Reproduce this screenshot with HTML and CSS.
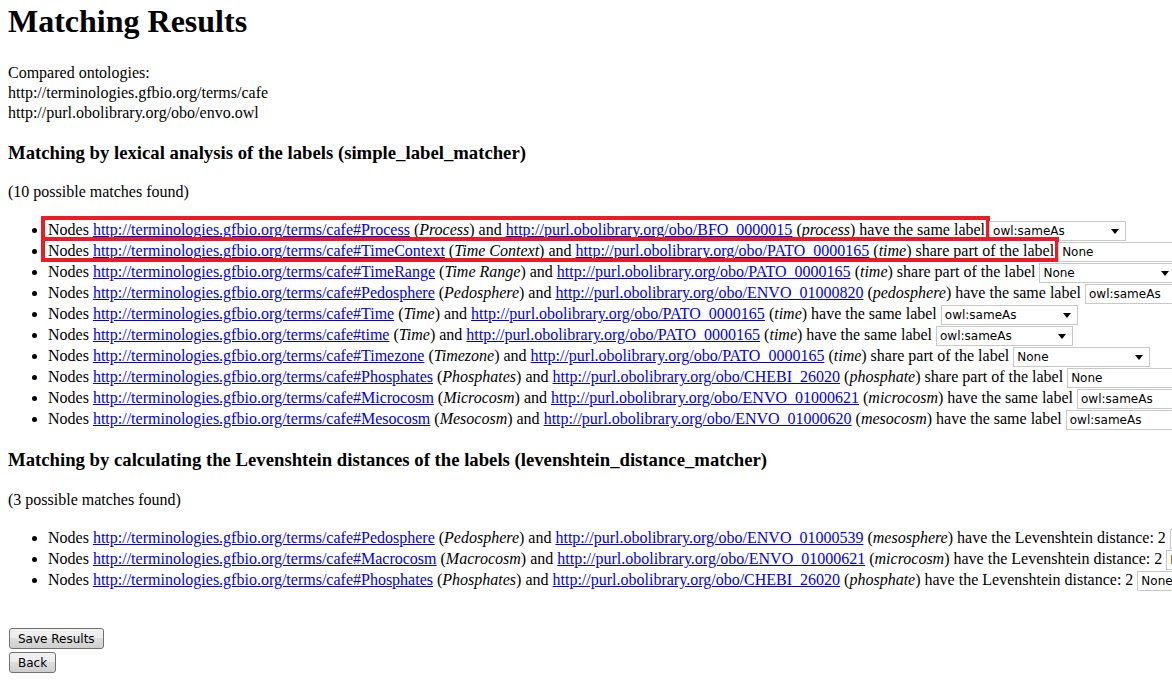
FILE: index.html
```html
<!DOCTYPE html>
<html>
<head>
<meta charset="utf-8">
<title>Matching Results</title>
<link rel="stylesheet" href="styles.css">
</head>
<body>
<h1 class="title">Matching Results</h1>
<p class="compared">Compared ontologies:<br>http://terminologies.gfbio.org/terms/cafe<br>http://purl.obolibrary.org/obo/envo.owl</p>

<h3 class="section">Matching by lexical analysis of the labels (simple_label_matcher)</h3>
<p class="count">(10 possible matches found)</p>
<ul class="matches">
<li><span class="hl">Nodes <a href="#">http://terminologies.gfbio.org/terms/cafe#Process</a> (<i>Process</i>) and <a href="#">http://purl.obolibrary.org/obo/BFO_0000015</a> (<i>process</i>) have the same label</span> <span class="sel"><select class="choice"><option selected>owl:sameAs</option><option>None</option></select><svg class="arrow" width="8" height="5" viewBox="0 0 8 5"><path d="M0 0H8L4 5Z" fill="#000"/></svg></span></li>
<li><span class="hl">Nodes <a href="#">http://terminologies.gfbio.org/terms/cafe#TimeContext</a> (<i>Time Context</i>) and <a href="#">http://purl.obolibrary.org/obo/PATO_0000165</a> (<i>time</i>) share part of the label</span> <span class="sel"><select class="choice"><option>owl:sameAs</option><option selected>None</option></select><svg class="arrow" width="8" height="5" viewBox="0 0 8 5"><path d="M0 0H8L4 5Z" fill="#000"/></svg></span></li>
<li>Nodes <a href="#">http://terminologies.gfbio.org/terms/cafe#TimeRange</a> (<i>Time Range</i>) and <a href="#">http://purl.obolibrary.org/obo/PATO_0000165</a> (<i>time</i>) share part of the label <span class="sel"><select class="choice"><option>owl:sameAs</option><option selected>None</option></select><svg class="arrow" width="8" height="5" viewBox="0 0 8 5"><path d="M0 0H8L4 5Z" fill="#000"/></svg></span></li>
<li>Nodes <a href="#">http://terminologies.gfbio.org/terms/cafe#Pedosphere</a> (<i>Pedosphere</i>) and <a href="#">http://purl.obolibrary.org/obo/ENVO_01000820</a> (<i>pedosphere</i>) have the same label <span class="sel"><select class="choice"><option selected>owl:sameAs</option><option>None</option></select><svg class="arrow" width="8" height="5" viewBox="0 0 8 5"><path d="M0 0H8L4 5Z" fill="#000"/></svg></span></li>
<li>Nodes <a href="#">http://terminologies.gfbio.org/terms/cafe#Time</a> (<i>Time</i>) and <a href="#">http://purl.obolibrary.org/obo/PATO_0000165</a> (<i>time</i>) have the same label <span class="sel"><select class="choice"><option selected>owl:sameAs</option><option>None</option></select><svg class="arrow" width="8" height="5" viewBox="0 0 8 5"><path d="M0 0H8L4 5Z" fill="#000"/></svg></span></li>
<li>Nodes <a href="#">http://terminologies.gfbio.org/terms/cafe#time</a> (<i>Time</i>) and <a href="#">http://purl.obolibrary.org/obo/PATO_0000165</a> (<i>time</i>) have the same label <span class="sel"><select class="choice"><option selected>owl:sameAs</option><option>None</option></select><svg class="arrow" width="8" height="5" viewBox="0 0 8 5"><path d="M0 0H8L4 5Z" fill="#000"/></svg></span></li>
<li>Nodes <a href="#">http://terminologies.gfbio.org/terms/cafe#Timezone</a> (<i>Timezone</i>) and <a href="#">http://purl.obolibrary.org/obo/PATO_0000165</a> (<i>time</i>) share part of the label <span class="sel"><select class="choice"><option>owl:sameAs</option><option selected>None</option></select><svg class="arrow" width="8" height="5" viewBox="0 0 8 5"><path d="M0 0H8L4 5Z" fill="#000"/></svg></span></li>
<li>Nodes <a href="#">http://terminologies.gfbio.org/terms/cafe#Phosphates</a> (<i>Phosphates</i>) and <a href="#">http://purl.obolibrary.org/obo/CHEBI_26020</a> (<i>phosphate</i>) share part of the label <span class="sel"><select class="choice"><option>owl:sameAs</option><option selected>None</option></select><svg class="arrow" width="8" height="5" viewBox="0 0 8 5"><path d="M0 0H8L4 5Z" fill="#000"/></svg></span></li>
<li>Nodes <a href="#">http://terminologies.gfbio.org/terms/cafe#Microcosm</a> (<i>Microcosm</i>) and <a href="#">http://purl.obolibrary.org/obo/ENVO_01000621</a> (<i>microcosm</i>) have the same label <span class="sel"><select class="choice"><option selected>owl:sameAs</option><option>None</option></select><svg class="arrow" width="8" height="5" viewBox="0 0 8 5"><path d="M0 0H8L4 5Z" fill="#000"/></svg></span></li>
<li>Nodes <a href="#">http://terminologies.gfbio.org/terms/cafe#Mesocosm</a> (<i>Mesocosm</i>) and <a href="#">http://purl.obolibrary.org/obo/ENVO_01000620</a> (<i>mesocosm</i>) have the same label <span class="sel"><select class="choice"><option selected>owl:sameAs</option><option>None</option></select><svg class="arrow" width="8" height="5" viewBox="0 0 8 5"><path d="M0 0H8L4 5Z" fill="#000"/></svg></span></li>
</ul>

<h3 class="section">Matching by calculating the Levenshtein distances of the labels (levenshtein_distance_matcher)</h3>
<p class="count">(3 possible matches found)</p>
<ul class="matches">
<li>Nodes <a href="#">http://terminologies.gfbio.org/terms/cafe#Pedosphere</a> (<i>Pedosphere</i>) and <a href="#">http://purl.obolibrary.org/obo/ENVO_01000539</a> (<i>mesosphere</i>) have the Levenshtein distance: 2 <span class="sel"><select class="choice"><option selected>None</option><option>owl:sameAs</option></select><svg class="arrow" width="8" height="5" viewBox="0 0 8 5"><path d="M0 0H8L4 5Z" fill="#000"/></svg></span></li>
<li>Nodes <a href="#">http://terminologies.gfbio.org/terms/cafe#Macrocosm</a> (<i>Macrocosm</i>) and <a href="#">http://purl.obolibrary.org/obo/ENVO_01000621</a> (<i>microcosm</i>) have the Levenshtein distance: 2 <span class="sel"><select class="choice"><option selected>None</option><option>owl:sameAs</option></select><svg class="arrow" width="8" height="5" viewBox="0 0 8 5"><path d="M0 0H8L4 5Z" fill="#000"/></svg></span></li>
<li>Nodes <a href="#">http://terminologies.gfbio.org/terms/cafe#Phosphates</a> (<i>Phosphates</i>) and <a href="#">http://purl.obolibrary.org/obo/CHEBI_26020</a> (<i>phosphate</i>) have the Levenshtein distance: 2 <span class="sel"><select class="choice"><option selected>None</option><option>owl:sameAs</option></select><svg class="arrow" width="8" height="5" viewBox="0 0 8 5"><path d="M0 0H8L4 5Z" fill="#000"/></svg></span></li>
</ul>

<div class="actions">
<button class="btn" type="button">Save Results</button>
<button class="btn" type="button">Back</button>
</div>
</body>
</html>
```

FILE: styles.css
```css
html {
  overflow: hidden;
}
body {
  margin: 0 0 8px 8px;
  font-family: "Liberation Serif", "Times New Roman", serif;
  font-size: 16px;
  color: #000;
  background: #fff;
}
.title {
  font-size: 32px;
  font-weight: bold;
  margin: 3px 0 23px 0;
}
.compared {
  line-height: 20px;
  margin: 0 0 16px 0;
}
.section {
  font-size: 18.72px;
  font-weight: bold;
  margin: 18.72px 0 19.72px 0;
}
.count {
  margin: 16px 0 18px 0;
}
a {
  color: #0000ee;
  text-decoration: underline;
}
.matches {
  margin: 18px 0 20px 0;
  padding-left: 40px;
  white-space: nowrap;
}
.matches li {
  height: 21px;
  line-height: 21px;
}
.hl {
  position: relative;
}
.hl::after {
  content: "";
  position: absolute;
  top: -5px;
  bottom: -3px;
  left: -7px;
  right: -5px;
  border: 4px solid #ed1c24;
  pointer-events: none;
}
.sel {
  position: relative;
  display: inline-block;
  vertical-align: baseline;
  line-height: normal;
}
.choice {
  -webkit-appearance: none;
  appearance: none;
  width: 137px;
  height: 20px;
  margin: 0;
  padding: 0 0 0 3px;
  border: 1px solid #c8c8c8;
  border-radius: 0;
  background: #fff;
  color: #000;
  font-family: "DejaVu Sans", Tahoma, sans-serif;
  font-size: 12px;
  vertical-align: baseline;
}
.arrow {
  position: absolute;
  right: 7px;
  top: 8px;
  pointer-events: none;
}
.actions {
  margin-top: 38px;
  display: flex;
  flex-direction: column;
  align-items: flex-start;
  gap: 3px;
}
.btn {
  height: 21px;
  margin: 0 0 0 1px;
  padding: 0 8px;
  border: 1px solid #707070;
  border-radius: 3px;
  background: linear-gradient(#f2f2f2, #ebebeb 50%, #dddddd 50%, #cfcfcf);
  font-family: "DejaVu Sans", Tahoma, sans-serif;
  font-size: 12px;
  color: #000;
}
```
